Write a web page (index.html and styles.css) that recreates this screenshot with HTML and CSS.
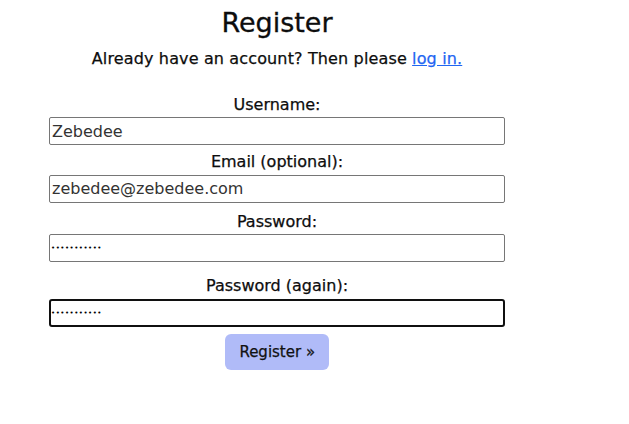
FILE: index.html
```html
<!DOCTYPE html>
<html lang="en">
<head>
<meta charset="utf-8">
<title>Register</title>
<link rel="stylesheet" href="styles.css">
</head>
<body>
<main class="page">
  <h1 class="title">Register</h1>
  <p class="lead">Already have an account? Then please <a class="link" href="#">log in.</a></p>
  <form class="form">
    <div class="field">
      <label class="label" for="username">Username:</label>
      <input class="input" id="username" type="text" value="Zebedee">
    </div>
    <div class="field field-mid">
      <label class="label" for="email">Email (optional):</label>
      <input class="input" id="email" type="text" value="zebedee@zebedee.com">
    </div>
    <div class="field field-spaced">
      <label class="label" for="password">Password:</label>
      <input class="input input-password" id="password" type="password" value="zebedeepass">
    </div>
    <div class="field">
      <label class="label" for="password2">Password (again):</label>
      <input class="input input-password input-focused" id="password2" type="password" value="zebedeepass">
    </div>
    <div class="actions">
      <button class="button" type="button">Register »</button>
    </div>
  </form>
</main>
</body>
</html>
```

FILE: styles.css
```css
html, body {
  margin: 0;
  padding: 0;
  background: #ffffff;
}

body {
  font-family: "DejaVu Sans", "Liberation Sans", sans-serif;
  color: #111111;
}

.page {
  width: 456px;
  margin-left: 49px;
  text-align: center;
}

.title {
  margin: 7px 0 0;
  font-size: 27px;
  line-height: 32px;
  font-weight: normal;
  color: #0d0d0d;
  -webkit-text-stroke: 0.3px #0d0d0d;
}

.lead {
  margin: 9.5px 0 0;
  font-size: 16px;
  line-height: 20px;
  letter-spacing: 0.14px;
  color: #0d0d0d;
  -webkit-text-stroke: 0.25px #0d0d0d;
}

.link {
  color: #1f66f2;
  text-decoration: underline;
  -webkit-text-stroke: 0.25px #1f66f2;
}

.form {
  display: flex;
  flex-direction: column;
  margin-top: 26px;
}

.field {
  display: flex;
  flex-direction: column;
  margin-bottom: 7px;
}

.field-mid {
  margin-bottom: 9px;
}

.field-spaced {
  margin-bottom: 14px;
}

.label {
  display: block;
  font-size: 16px;
  line-height: 20px;
  color: #0d0d0d;
  -webkit-text-stroke: 0.25px #0d0d0d;
  margin-bottom: 2.5px;
}

.input {
  box-sizing: border-box;
  width: 100%;
  height: 28px;
  margin: 0;
  padding: 0 2px;
  border: 1px solid #767676;
  border-radius: 2px;
  font-family: "DejaVu Sans", "Liberation Sans", sans-serif;
  font-size: 16px;
  color: #333333;
  background: #ffffff;
  outline: none;
}

.input-password {
  font-size: 7px;
  letter-spacing: 0.5px;
  color: #000000;
  padding-left: 1px;
}

.input-focused {
  border: 2px solid #101010;
  border-radius: 3px;
  padding-left: 0;
}

.actions {
  display: flex;
  justify-content: center;
  margin-top: 0;
}

.button {
  height: 36px;
  padding: 0 14px 0 14.5px;
  border: none;
  border-radius: 6px;
  background: #b0bbf8;
  font-family: "DejaVu Sans", "Liberation Sans", sans-serif;
  font-size: 15px;
  color: #111111;
  -webkit-text-stroke: 0.25px #111111;
  cursor: pointer;
}
```
